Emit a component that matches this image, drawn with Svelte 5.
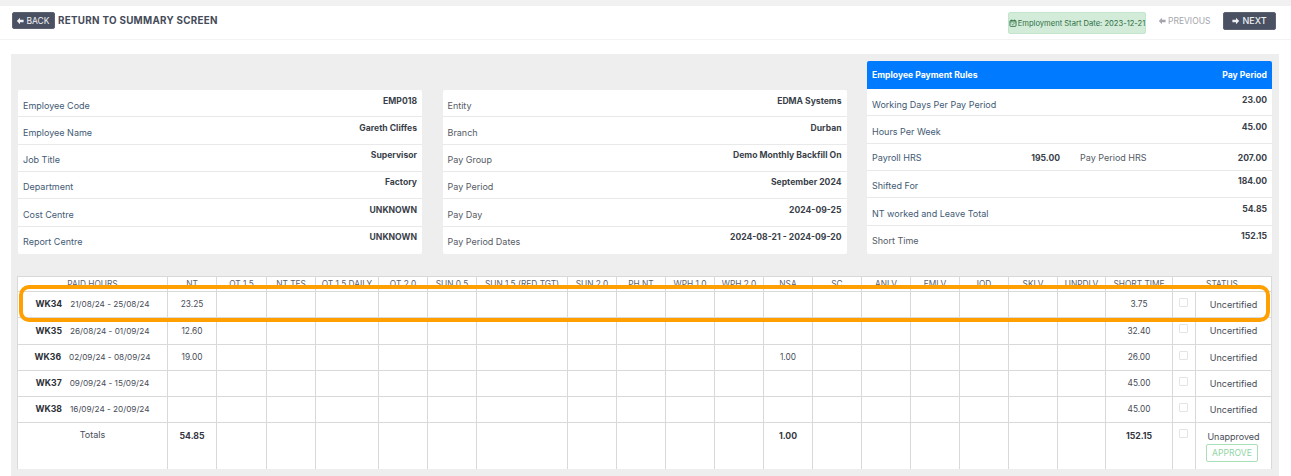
<script>
  const emp = [['Employee Code','EMP018'],['Employee Name','Gareth Cliffes'],['Job Title','Supervisor'],['Department','Factory'],['Cost Centre','UNKNOWN'],['Report Centre','UNKNOWN']];
  const ent = [['Entity','EDMA Systems'],['Branch','Durban'],['Pay Group','Demo Monthly Backfill On'],['Pay Period','September 2024'],['Pay Day','2024-09-25'],['Pay Period Dates','2024-08-21 - 2024-09-20']];
  const heads = ['NT','OT 1.5','NT TES','OT 1.5 DAILY','OT 2.0','SUN 0.5','SUN 1.5 (RED TGT)','SUN 2.0','PH NT','WPH 1.0','WPH 2.0','NSA','SC','ANLV','EMLV','IOD','SKLV','UNPDLV','SHORT TIME'];
  const widths = [150,49,50,49,63,49,49,91,49,49,49,49,49,49,49,49,49,49,48,67,23,76];
  const weeks = [
    {wk:'WK34',d:'21/08/24 - 25/08/24',nt:'23.25',nsa:'',st:'3.75',h:26},
    {wk:'WK35',d:'26/08/24 - 01/09/24',nt:'12.60',nsa:'',st:'32.40',h:27},
    {wk:'WK36',d:'02/09/24 - 08/09/24',nt:'19.00',nsa:'1.00',st:'26.00',h:26},
    {wk:'WK37',d:'09/09/24 - 15/09/24',nt:'',nsa:'',st:'45.00',h:26},
    {wk:'WK38',d:'16/09/24 - 20/09/24',nt:'',nsa:'',st:'45.00',h:26}
  ];
  const cell = (w, i) => i === 0 ? w.nt : i === 11 ? w.nsa : i === 18 ? w.st : '';
</script>

{#snippet left()}<svg class="arr" viewBox="0 0 10 10"><path d="M5 1 L1 5 L5 9 L5 6.5 L9.5 6.5 L9.5 3.5 L5 3.5 Z" fill="currentColor"/></svg>{/snippet}
{#snippet right()}<svg class="arr" viewBox="0 0 10 10"><path d="M5 1 L9 5 L5 9 L5 6.5 L.5 6.5 L.5 3.5 L5 3.5 Z" fill="currentColor"/></svg>{/snippet}

<div class="strip"></div>
<header>
  <div class="hl">
    <button class="dark back">{@render left()}BACK</button>
    <span class="title">RETURN TO SUMMARY SCREEN</span>
  </div>
  <div class="hr">
    <div class="pill">
      <svg viewBox="0 0 10 10" class="cal"><rect x="1.2" y="1.8" width="7.6" height="7.4" rx="1" fill="none" stroke="currentColor" stroke-width="1.1"/><path d="M1.2 3.6H8.8M3 .8V2.4M7 .8V2.4" stroke="currentColor" stroke-width="1"/><path d="M3.3 6.2 4.6 7.4 6.8 5" fill="none" stroke="currentColor" stroke-width=".9"/></svg>
      Employment Start Date: 2023-12-21
    </div>
    <span class="prev">{@render left()}PREVIOUS</span>
    <button class="dark next">{@render right()}NEXT</button>
  </div>
</header>

<main class="panel">
  <section class="cards">
    <div class="card plain">
      {#each emp as [l, v]}<div class="row"><span class="lab blue">{l}</span><b>{v}</b></div>{/each}
    </div>
    <div class="card plain">
      {#each ent as [l, v]}<div class="row"><span class="lab">{l}</span><b>{v}</b></div>{/each}
    </div>
    <div class="card">
      <div class="bluehead"><b>Employee Payment Rules</b><b>Pay Period</b></div>
      <div class="row"><span class="lab blue">Working Days Per Pay Period</span><b>23.00</b></div>
      <div class="row"><span class="lab blue">Hours Per Week</span><b>45.00</b></div>
      <div class="row mid">
        <span class="half"><span class="lab blue">Payroll HRS</span><b>195.00</b></span>
        <span class="half two"><span class="lab">Pay Period HRS</span><b>207.00</b></span>
      </div>
      <div class="row"><span class="lab blue">Shifted For</span><b>184.00</b></div>
      <div class="row"><span class="lab blue">NT worked and Leave Total</span><b>54.85</b></div>
      <div class="row"><span class="lab">Short Time</span><b>152.15</b></div>
    </div>
  </section>

  <section class="tablewrap">
    <table>
      <colgroup>{#each widths as w}<col style:width="{w}px" />{/each}</colgroup>
      <thead>
        <tr>
          <th>PAID HOURS</th>
          {#each heads as h}<th>{h}</th>{/each}
          <th colspan="2">STATUS</th>
        </tr>
      </thead>
      <tbody>
        {#each weeks as w}
          <tr style:height="{w.h}px">
            <td class="wk"><b>{w.wk}</b><span>{w.d}</span></td>
            {#each heads as _, i}<td>{cell(w, i)}</td>{/each}
            <td class="chk"><i></i></td>
            <td class="st">Uncertified</td>
          </tr>
        {/each}
        <tr class="totals">
          <td class="tl">Totals</td>
          {#each heads as _, i}<td class="b">{i === 0 ? '54.85' : i === 11 ? '1.00' : i === 18 ? '152.15' : ''}</td>{/each}
          <td class="chk"><i></i></td>
          <td class="stat">Unapproved<button class="approve">APPROVE</button></td>
        </tr>
      </tbody>
    </table>
    <div class="highlight"></div>
  </section>
</main>

<style>
  :global(body) { margin: 0; background: #fff; font-family: Inter, "Liberation Sans", sans-serif; color: #3e4450; overflow: hidden; }
  .strip { height: 6px; background: #f1f1f1; }
  header { height: 33px; border-bottom: 1px solid #f3f3f3; display: flex; justify-content: space-between; padding: 0 15px 0 11.5px; }
  .hl { display: flex; align-items: flex-start; padding-top: 6px; gap: 3.5px; }
  .hr { display: flex; align-items: flex-start; padding-top: 5.5px; }
  button { font-family: inherit; margin: 0; cursor: pointer; }
  .dark { background: #4a5163; color: #eef0f3; border: 1px solid #5c6272; border-radius: 2px; font-size: 8.5px; display: inline-flex; align-items: center; justify-content: center; gap: 2px; padding: 0; }
  .back { width: 43px; height: 17px; }
  .next { width: 53px; height: 18.5px; font-size: 9px; margin-left: 12px; font-weight: 500; }
  .arr { width: 8px; height: 8px; flex: none; }
  .title { font-weight: 700; font-size: 9.8px; line-height: 17px; letter-spacing: .3px; color: #454b59; }
  .pill { width: 138px; height: 22px; box-sizing: border-box; margin-top: .5px; background: #d2ecd9; color: #2f6f45; border: 1px solid #c4e5cd; border-radius: 2px; font-size: 7.6px; display: flex; align-items: center; justify-content: center; gap: 1px; white-space: nowrap; }
  .cal { width: 8px; height: 8px; flex: none; }
  .prev { display: inline-flex; align-items: center; gap: 2px; color: #a3a6ac; font-size: 8.5px; height: 18px; margin-left: 12px; width: 53px; }
  .panel { margin: 14px 12px 0 11px; height: 422px; padding: 7px; box-sizing: border-box; background: #eeeeee; }
  .cards { display: grid; grid-template-columns: 404px 404px 405px; column-gap: 20.5px; }
  .card { background: #fff; border-radius: 2px; }
  .card.plain { margin-top: 29px; }
  .bluehead { height: 28px; background: #007bff; color: #fff; border-radius: 2px 2px 0 0; display: flex; justify-content: space-between; align-items: center; padding: 0 5px; font-size: 8.6px; }
  .row { height: 27.33px; box-sizing: border-box; border-bottom: 1px solid #e9e9e9; display: flex; justify-content: space-between; align-items: flex-start; padding: 5.5px 5px 0; font-size: 8.6px; }
  .row:last-child { border-bottom: 0; }
  .row b { font-weight: 700; color: #3a3f4a; line-height: 10px; white-space: nowrap; }
  .lab { font-size: 9px; line-height: 12px; margin-top: 4px; color: #555b66; white-space: nowrap; }
  .lab.blue { color: #3f5a74; }
  .mid { align-items: center; padding-top: 3px; padding-bottom: 0; gap: 0; }
  .mid .lab, .mid b { margin: 0; }
  .half { display: flex; justify-content: space-between; align-items: center; width: 188px; }
  .half.two { width: 187px; }
  .tablewrap { position: relative; margin: 22px 0 0 -1px; }
  table { border-collapse: collapse; table-layout: fixed; width: 1255px; background: #fff; font-size: 8.3px; color: #474c57; }
  th, td { border: 1px solid #d9d9d9; padding: 0; text-align: center; overflow: hidden; white-space: nowrap; }
  th { height: 13px; font-weight: 400; font-size: 8.3px; color: #59606b; line-height: 13px; vertical-align: top; padding-top: 1px; }
  .wk b { font-weight: 700; color: #2c2f37; font-size: 8.7px; margin-right: 8px; }
  .wk span { font-size: 8.2px; }
  .st, .stat { font-size: 9px; }
  .chk { vertical-align: top; padding-top: 6.5px; }
  .chk i { display: block; width: 7px; height: 7px; margin: 0 auto 0 6px; border: 1px solid #e4e4e4; border-radius: 1px; }
  .totals { height: 47px; }
  .totals td { vertical-align: top; padding-top: 7px; border-bottom: 0; }
  .totals td.tl { font-size: 9px; padding-top: 6px; }
  .totals td.b { font-weight: 700; color: #33373f; padding-top: 8px; font-size: 8.7px; }
  .totals td.chk { padding-top: 6px; }
  .totals td.stat { padding-top: 8px; line-height: 11px; }
  .approve { display: block; width: 52px; height: 18px; margin: 2px 0 0 10px; background: #fff; border: 1px solid #a8dfb8; border-radius: 2px; color: #90d5a6; font-size: 8.6px; padding: 0; }
  .highlight { position: absolute; left: 2px; top: 9px; width: 1251px; height: 37.5px; box-sizing: border-box; border: 4px solid #ffa000; border-radius: 10px; pointer-events: none; }
</style>
